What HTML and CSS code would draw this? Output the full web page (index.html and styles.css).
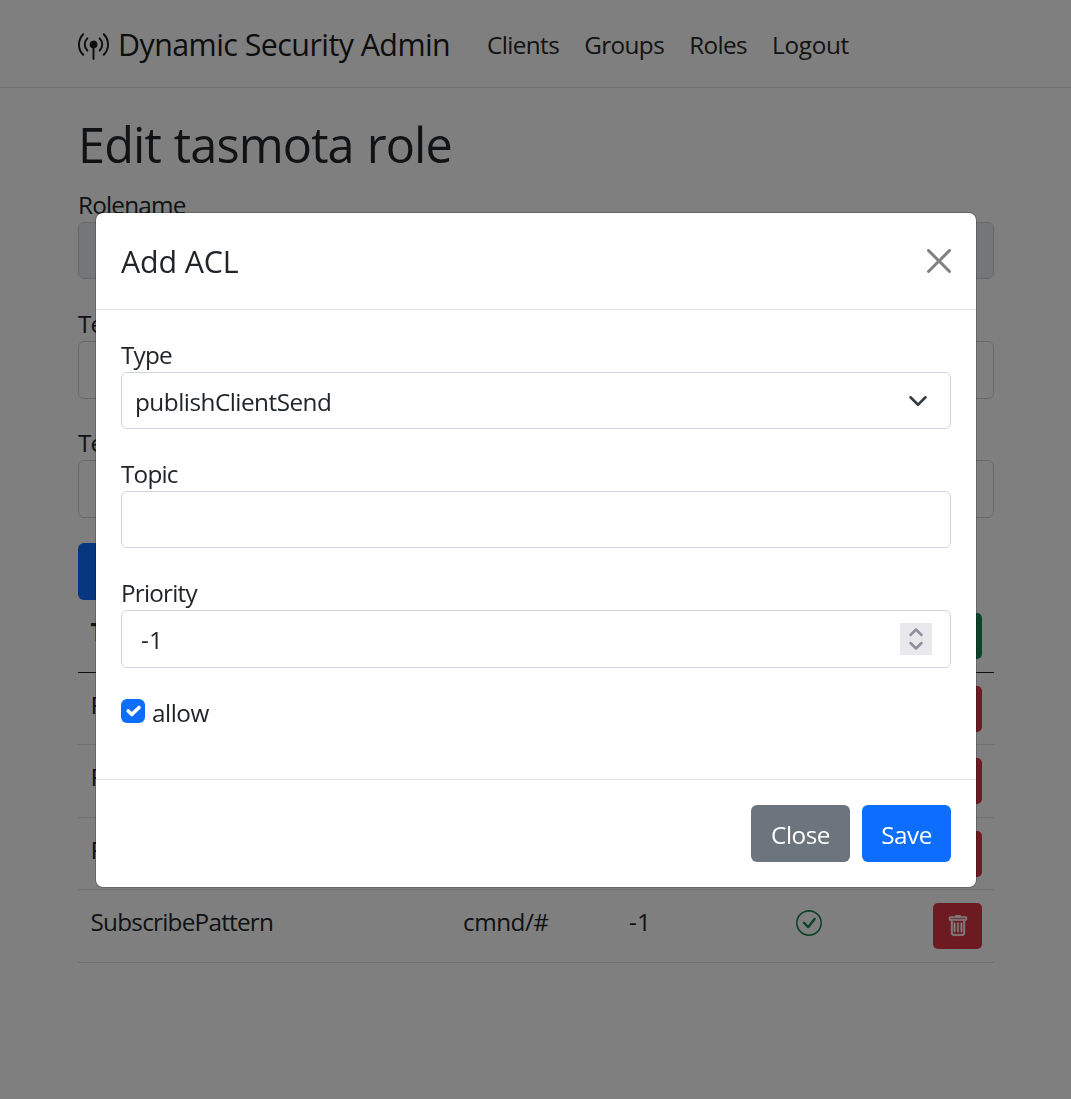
FILE: index.html
```html
<!DOCTYPE html>
<html lang="en">
<head>
<meta charset="utf-8">
<title>Dynamic Security Admin</title>
<link rel="stylesheet" href="styles.css">
</head>
<body>
<svg class="sprite" aria-hidden="true">
  <symbol id="trash" viewBox="0 0 16 16"><path d="M5.5 5.5A.5.5 0 0 1 6 6v6a.5.5 0 0 1-1 0V6a.5.5 0 0 1 .5-.5m2.5 0a.5.5 0 0 1 .5.5v6a.5.5 0 0 1-1 0V6a.5.5 0 0 1 .5-.5m3 .5a.5.5 0 0 0-1 0v6a.5.5 0 0 0 1 0z"/><path d="M14.5 3a1 1 0 0 1-1 1H13v9a2 2 0 0 1-2 2H5a2 2 0 0 1-2-2V4h-.5a1 1 0 0 1-1-1V2a1 1 0 0 1 1-1H6a1 1 0 0 1 1-1h2a1 1 0 0 1 1 1h3.500a1 1 0 0 1 1 1zM4 4v9a1 1 0 0 0 1 1h6a1 1 0 0 0 1-1V4zM2.500 3h11V2h-11z"/></symbol>
  <symbol id="check" viewBox="0 0 16 16"><path d="M8 15A7 7 0 1 1 8 1a7 7 0 0 1 0 14m0 1A8 8 0 1 0 8 0a8 8 0 0 0 0 16"/><path d="m10.970 4.970-.02.022-3.473 4.425-2.093-2.094a.75.75 0 0 0-1.060 1.060L6.970 11.030a.75.75 0 0 0 1.079-.020l3.992-4.990a.75.75 0 0 0-1.071-1.050"/></symbol>
</svg>
<nav class="navbar">
  <a class="brand"><svg class="brand-icon" viewBox="0 0 16 16"><path fill-rule="evenodd" d="M3.05 3.05a7 7 0 0 0 0 9.9.5.5 0 0 1-.707.707 8 8 0 0 1 0-11.314.5.5 0 0 1 .707.707m2.122 2.122a4 4 0 0 0 0 5.656.5.5 0 1 1-.708.708 5 5 0 0 1 0-7.072.5.5 0 0 1 .708.708m5.656-.708a.5.5 0 0 1 .708 0 5 5 0 0 1 0 7.072.5.5 0 1 1-.708-.708 4 4 0 0 0 0-5.656.5.5 0 0 1 0-.708m2.122-2.12a.5.5 0 0 1 .707 0 8 8 0 0 1 0 11.313.5.5 0 0 1-.707-.707 7 7 0 0 0 0-9.9.5.5 0 0 1 0-.707zM6 8a2 2 0 1 1 2.5 1.937V15.5a.5.5 0 0 1-1 0V9.937A2 2 0 0 1 6 8"/></svg><span>Dynamic Security Admin</span></a>
  <div class="links"><a>Clients</a><a>Groups</a><a>Roles</a><a class="logout">Logout</a></div>
</nav>
<main class="container">
  <h1>Edit tasmota role</h1>
  <div class="field"><label>Rolename</label><div class="control disabled"></div></div>
  <div class="field"><label>Text name</label><div class="control"></div></div>
  <div class="field"><label>Text description</label><div class="control"></div></div>
  <div class="btn primary submit">Save</div>
  <div class="table">
    <div class="row head"><span>Type</span><span>Topic</span><span>Priority</span><span>Allow</span><div class="btn-sm add"></div></div>
    <div class="row"><span>PublishClientSend</span><span></span><span></span><span></span><div class="btn-sm"><svg><use href="#trash"/></svg></div></div>
    <div class="row"><span>PublishClientReceive</span><span></span><span></span><span></span><div class="btn-sm"><svg><use href="#trash"/></svg></div></div>
    <div class="row"><span>PublishClientReceive</span><span></span><span></span><span></span><div class="btn-sm"><svg><use href="#trash"/></svg></div></div>
    <div class="row"><span class="pattern">SubscribePattern</span><span>cmnd/#</span><span class="value">-1</span><span class="state"><svg><use href="#check"/></svg></span><div class="btn-sm"><svg><use href="#trash"/></svg></div></div>
  </div>
</main>
<div class="backdrop">
  <section class="modal">
    <header class="modal-header"><h5>Add ACL</h5><svg class="close" viewBox="0 0 16 16"><path d="M.293.293a1 1 0 0 1 1.414 0L8 6.586 14.293.293a1 1 0 1 1 1.414 1.414L9.414 8l6.293 6.293a1 1 0 0 1-1.414 1.414L8 9.414l-6.293 6.293a1 1 0 0 1-1.414-1.414L6.586 8 .293 1.707a1 1 0 0 1 0-1.414"/></svg></header>
    <div class="modal-body">
      <div class="field"><label>Type</label><div class="control select"><span>publishClientSend</span><svg class="chevron" viewBox="0 0 16 16"><path d="m2 5 6 6 6-6"/></svg></div></div>
      <div class="field"><label>Topic</label><div class="control"></div></div>
      <div class="field"><label>Priority</label><div class="control number"><span class="value">-1</span><svg class="spinner" viewBox="0 0 32 32"><path d="m10.500 12 5.500-5.500 5.500 5.500M10.500 20l5.500 5.500 5.500-5.500"/></svg></div></div>
      <div class="check"><svg class="checkbox" viewBox="0 0 20 20"><path d="m6 10 3 3 6-6"/></svg><span>allow</span></div>
    </div>
    <footer class="modal-footer"><div class="btn secondary">Close</div><div class="btn primary">Save</div></footer>
  </section>
</div>
</body>
</html>
```
FILE: styles.css
```css
* { box-sizing: border-box; }
body {
  margin: 0;
  height: 1099px;
  overflow: hidden;
  background: #fff;
  color: #212529;
  font: 24.3px/37.2px "Open Sans", "Noto Sans", sans-serif;
  letter-spacing: -0.5px;
}
.sprite { display: none; }
svg { flex: none; fill: currentColor; }
.navbar {
  display: flex;
  align-items: center;
  height: 88px;
  padding: 3px 78px 0;
  border-bottom: 1px solid #dee2e6;
}
.brand {
  display: flex;
  align-items: center;
  width: 409px;
  gap: 9px;
  font-size: 30.4px;
  letter-spacing: -0.55px;
  color: #1a1a1a;
}
.brand-icon { width: 31px; height: 31px; }
.links { display: flex; gap: 25px; letter-spacing: -0.6px; color: #262626; }
.logout { letter-spacing: -0.3px; }
.container { padding: 26px 77px 0 78px; }
h1 {
  margin: 0 0 13px;
  font-size: 48.6px;
  font-weight: 400;
  line-height: 60px;
  letter-spacing: -0.87px;
  word-spacing: 1.2px;
}
.field { height: 95px; margin-bottom: 24px; }
.field label { display: block; height: 37px; padding-top: 1px; letter-spacing: -0.8px; }
.container .field label { height: 35px; padding-top: 0; line-height: 35px; }
.control {
  display: flex;
  align-items: center;
  height: 58px;
  border: 1px solid #ced4da;
  border-radius: 6px;
  background: #fff;
}
.disabled { height: 57px; background: #e9ecef; }
.modal .control { height: 57px; }
.btn {
  display: inline-flex;
  justify-content: center;
  height: 57px;
  padding-top: 11px;
  border-radius: 6px;
  color: #fff;
}
.primary { width: 89px; background: #0d6efd; }
.secondary { width: 99px; background: #6c757d; }
.submit { display: flex; margin-top: -1px; }
.row {
  display: grid;
  grid-template-columns: 372.5px 166px 167px 1fr 49px;
  height: 72.5px;
  padding: 12.9px 12px 0 12.5px;
  border-bottom: 1px solid #dee2e6;
}
.head { height: 72.8px; font-weight: 700; border-color: #212529; }
.pattern { letter-spacing: -0.76px; }
.value { letter-spacing: 0.2px; }
.btn-sm {
  display: flex;
  align-items: center;
  justify-content: center;
  height: 46px;
  border-radius: 5px;
  background: #dc3545;
  color: #fff;
}
.btn-sm svg { width: 22px; height: 22px; stroke: currentColor; stroke-width: .4; }
.add { background: #198754; }
.state { color: #198754; }
.state svg { display: block; width: 26px; height: 26px; margin-top: 6.500px; }
.backdrop {
  position: fixed;
  inset: 0;
  padding: 212px 94px 0 95px;
  background: rgba(0, 0, 0, .5);
}
.modal {
  height: 676px;
  border: 1px solid rgba(0, 0, 0, .2);
  border-radius: 8px;
  background: #fff;
  background-clip: padding-box;
}
.modal-header {
  display: flex;
  align-items: center;
  justify-content: space-between;
  height: 97px;
  padding: 0 25px;
  border-bottom: 1px solid #dee2e6;
}
h5 { margin: 2px 0 0; font-size: 30.400px; font-weight: 400; letter-spacing: -0.15px; }
.close { width: 24px; height: 24px; fill: #808080; }
.modal-body { height: 470px; padding: 25px 25px 0; border-bottom: 1px solid #dee2e6; }
.select, .number { justify-content: space-between; }
.select { padding: 0 22px 0 13px; }
.select span { padding-top: 2px; }
.chevron { width: 20px; height: 20px; fill: none; stroke: #343a40; stroke-width: 2; stroke-linecap: round; stroke-linejoin: round; }
.modal .number { height: 58px; padding: 0 18px 0 19px; }
.number span { padding-top: 1px; }
.spinner { width: 32px; height: 32px; background: #e9e9ed; fill: none; stroke: #8f8f9d; stroke-width: 2.500; stroke-linecap: round; stroke-linejoin: round; }
.check { display: flex; gap: 7px; padding-top: 7px; }
.check span { line-height: 27px; }
.checkbox { width: 24px; height: 24px; border-radius: 6px; background: #0d6efd; fill: none; stroke: #fff; stroke-width: 3; stroke-linecap: round; stroke-linejoin: round; }
.modal-footer { display: flex; justify-content: flex-end; gap: 12px; padding: 25px 25px 0; }
```
